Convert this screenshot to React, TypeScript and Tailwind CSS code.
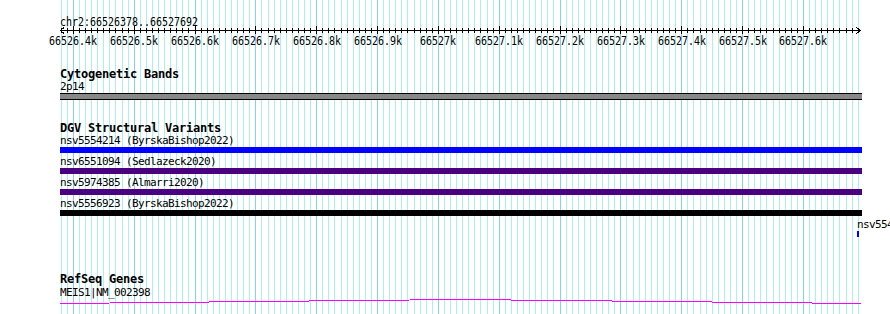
import React from "react";

const START = 66526378;
const END = 66527692;
const LEFT = 60;
const WIDTH = 800;
const scale = WIDTH / (END - START + 1);

const px = (bp: number) => LEFT + (bp - START) * scale;
const col = (bp: number) => Math.floor(px(bp)) + 0.5;

const ticks: number[] = [];
for (let bp = 66526380; bp <= 66527690; bp += 10) ticks.push(bp);

const majorLabel = (bp: number) => {
  const k = bp / 1000;
  return `${Number.isInteger(k) ? k : k.toFixed(1)}k`;
};

const variants = [
  { name: "nsv5554214 (ByrskaBishop2022)", color: "bg-[#0000ff]" },
  { name: "nsv6551094 (Sedlazeck2020)", color: "bg-[#4b0082]" },
  { name: "nsv5974385 (Almarri2020)", color: "bg-[#4b0082]" },
  { name: "nsv5556923 (ByrskaBishop2022)", color: "bg-black" },
];

const mono = "DejaVu Sans Mono, monospace";

const Grid = () => (
  <svg className="absolute inset-0" width={890} height={314} shapeRendering="crispEdges">
    {ticks.map((bp) => (
      <line
        key={bp}
        x1={col(bp)}
        x2={col(bp)}
        y1={0}
        y2={314}
        stroke={bp % 100 === 0 ? "#87cefa" : "#afeeee"}
        strokeWidth={1}
      />
    ))}
  </svg>
);

const Ruler = () => (
  <svg width={890} height={50} className="block" shapeRendering="crispEdges">
    <text x={60} y={26} fontFamily={mono} fontSize={11.5} textLength={138} lengthAdjust="spacingAndGlyphs" fill="#000">
      chr2:66526378..66527692
    </text>
    <line x1={60} x2={861} y1={30.5} y2={30.5} stroke="#000" />
    <polyline points="64,27.5 60.5,30.5 64,33.5" fill="none" stroke="#000" />
    <polyline points="856,27.5 860.5,30.5 856,33.5" fill="none" stroke="#000" />
    {ticks.map((bp) => {
      const major = bp % 100 === 0;
      return (
        <line key={bp} x1={col(bp)} x2={col(bp)} y1={major ? 26 : 28} y2={major ? 34 : 33} stroke="#000" />
      );
    })}
    {ticks
      .filter((bp) => bp % 100 === 0)
      .map((bp) => {
        const label = majorLabel(bp);
        const w = label.length * 6;
        return (
          <text
            key={bp}
            x={Math.round(px(bp) - w / 2)}
            y={44.5}
            fontFamily={mono}
            fontSize={12}
            textLength={w}
            lengthAdjust="spacingAndGlyphs"
            fill="#000"
          >
            {label}
          </text>
        );
      })}
  </svg>
);

const Title = ({ children, className = "" }: { children: React.ReactNode; className?: string }) => (
  <div className={`h-[12px] leading-[12px] text-[12px] font-bold tracking-[-0.22px] text-black whitespace-nowrap ${className}`}>
    {children}
  </div>
);

const Label = ({ children, className = "" }: { children: React.ReactNode; className?: string }) => (
  <div className={`h-[10px] leading-[10px] text-[11px] tracking-[-0.62px] text-black whitespace-nowrap ${className}`}>
    {children}
  </div>
);

export default function App() {
  return (
    <div className="relative w-[890px] h-[314px] overflow-hidden bg-white font-['DejaVu_Sans_Mono',monospace]">
      <Grid />
      <div className="relative flex flex-col">
        <Ruler />

        <div className="pl-[60px] flex flex-col">
          {/* Cytogenetic bands */}
          <Title className="mt-[18px]">Cytogenetic Bands</Title>
          <Label className="mt-[2px]">2p14</Label>
          <div className="mt-[1px] w-[802px] h-[7px] bg-[#888888] border-y border-black" />

          {/* DGV */}
          <Title className="mt-[22px]">DGV Structural Variants</Title>
          <div className="flex flex-col gap-[4px] mt-[2px]">
            {variants.map((v) => (
              <div key={v.name} className="flex flex-col gap-[1px]">
                <Label>{v.name}</Label>
                <div className={`w-[802px] h-[6px] ${v.color}`} />
              </div>
            ))}
            <div className="flex flex-col gap-[1px] ml-[797px]">
              <Label>nsv5543</Label>
              <div className="w-[2px] h-[6px] bg-[#0000ff]" />
            </div>
          </div>

          {/* RefSeq */}
          <Title className="mt-[36px]">RefSeq Genes</Title>
          <Label className="mt-[3px]">MEIS1|NM_002398</Label>
        </div>
        <svg width={890} height={16} className="block" shapeRendering="crispEdges">
          <polyline points="60,5.5 460.5,1.5 861,5.5" fill="none" stroke="#ff00ff" strokeWidth={1} />
        </svg>
      </div>
    </div>
  );
}
